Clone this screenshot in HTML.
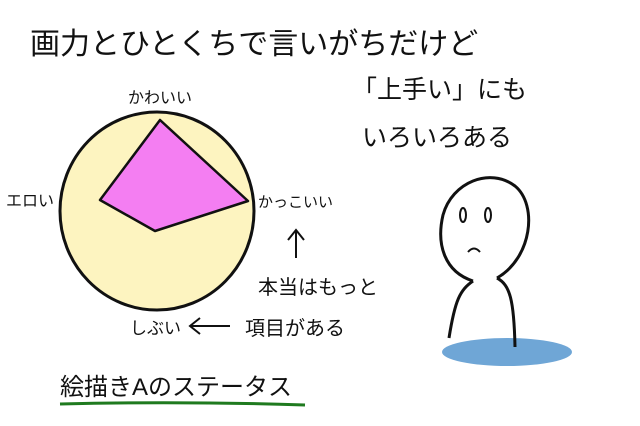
<!DOCTYPE html>
<html><head><meta charset="utf-8"><style>
body{margin:0;background:#fff;}
svg{display:block}
text{font-family:"Liberation Sans","Noto Sans CJK JP",sans-serif;fill:#111}
</style></head><body>
<svg width="640" height="426" viewBox="0 0 640 426">
<rect width="640" height="426" fill="#fff"/>
<text x="30" y="54" font-size="30">画力とひとくちで言いがちだけど</text>
<ellipse cx="157" cy="211" rx="97" ry="99" fill="#fdf4c0" stroke="#111" stroke-width="3"/>
<polygon points="160,120 248,201 155,231 100,200" fill="#f47ef2" stroke="#111" stroke-width="2.5" stroke-linejoin="round"/>
<text x="128" y="103" font-size="16">かわいい</text>
<text x="6" y="206" font-size="16">エロい</text>
<text x="258" y="207" font-size="15">かっこいい</text>
<text x="130" y="334" font-size="17">しぶい</text>
<path d="M190,326 L230,326 M200,318 L190,326 L200,334" stroke="#111" stroke-width="2" fill="none"/>
<path d="M296,258 L296,230 M288,240 L296,230 L304,240" stroke="#111" stroke-width="2" fill="none"/>
<text x="258" y="294" font-size="20">本当はもっと</text>
<text x="245" y="335" font-size="20">項目がある</text>
<text x="352" y="98" font-size="25">「上手い」にも</text>
<text x="362" y="146" font-size="25">いろいろある</text>
<ellipse cx="507" cy="352" rx="65" ry="14" fill="#6fa6d6"/>
<path d="M473,281 C445,272 436,245 443,215 C452,182 490,167 515,186 C538,205 532,258 497,278" fill="#fff" stroke="#111" stroke-width="3"/>
<path d="M473,281 C460,290 455,300 449,338" fill="none" stroke="#111" stroke-width="3"/>
<path d="M497,278 C510,285 514,300 515,347" fill="none" stroke="#111" stroke-width="3"/>
<ellipse cx="463" cy="215" rx="3" ry="7" fill="none" stroke="#111" stroke-width="2"/>
<ellipse cx="488" cy="215" rx="3" ry="7" fill="none" stroke="#111" stroke-width="2"/>
<path d="M468,252 Q474,245 480,252" fill="none" stroke="#111" stroke-width="2"/>
<text x="60" y="395" font-size="24">絵描きAのステータス</text>
<path d="M60,404 Q180,401 305,405" stroke="#1f7a1f" stroke-width="3" fill="none"/>
</svg>
</body></html>
